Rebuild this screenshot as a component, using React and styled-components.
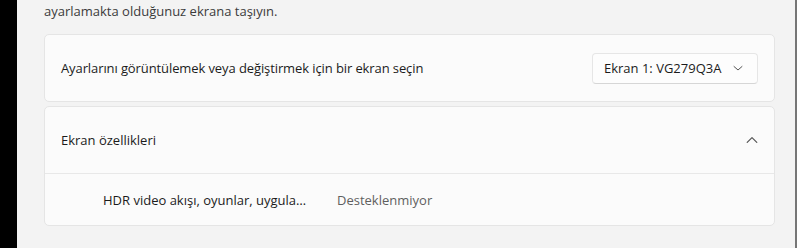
import React from "react";
import styled, { createGlobalStyle } from "styled-components";

const GlobalStyle = createGlobalStyle`
  html, body { margin: 0; padding: 0; }
  body {
    background: #f3f3f3;
    font-family: "Open Sans", "Noto Sans", "Liberation Sans", sans-serif;
    -webkit-font-smoothing: antialiased;
  }
`;

const Shell = styled.div`
  display: flex;
  height: 248px;
  width: 797px;
  overflow: hidden;
`;

const LeftStrip = styled.div`
  width: 17px;
  flex: none;
  background: #000;
`;

const RightEdge = styled.div`
  width: 2px;
  flex: none;
  background: #767676;
`;

const Main = styled.main`
  flex: 1;
  padding: 0 20px 0 27px;
  display: flex;
  flex-direction: column;
  min-width: 0;
`;

const Intro = styled.p`
  margin: -19px 0 0 0;
  font-size: 13px;
  line-height: 20px;
  color: #3b3b3b;
  white-space: nowrap;
`;

const Card = styled.section`
  background: #fbfbfb;
  border: 1px solid #e5e5e5;
  border-radius: 5px;
  margin-top: ${(p) => p.$gap || 0}px;
`;

const Row = styled.div`
  display: flex;
  align-items: center;
  justify-content: space-between;
  height: ${(p) => p.$h}px;
  padding: 0 16px;
`;

const Label = styled.span`
  font-size: 13px;
  color: #1b1b1b;
  white-space: nowrap;
  letter-spacing: ${(p) => p.$tight ? "-0.1px" : "0"};
`;

const Select = styled.button`
  display: flex;
  align-items: center;
  justify-content: space-between;
  width: 166px;
  height: 31px;
  box-sizing: border-box;
  padding: 0 14px 0 11px;
  background: #fdfdfd;
  border: 1px solid #e6e6e6;
  border-bottom-color: #d6d6d6;
  border-radius: 4px;
  font-family: inherit;
  font-size: 13px;
  color: #1b1b1b;
  cursor: pointer;
`;

const Divider = styled.div`
  height: 1px;
  background: #e8e8e8;
`;

const SubRow = styled.div`
  display: flex;
  align-items: center;
  height: 51px;
  padding-left: 58px;
`;

const SubLabel = styled.span`
  width: 234px;
  flex: none;
  font-size: 13px;
  color: #1b1b1b;
  white-space: nowrap;
`;

const SubValue = styled.span`
  font-size: 13px;
  color: #5f5f5f;
  white-space: nowrap;
`;

const Chevron = ({ up, size = 10 }) => (
  <svg width={size} height={size} viewBox="0 0 10 10" fill="none">
    <path
      d={up ? "M1 7 L5 3 L9 7" : "M1 3.5 L5 7 L9 3.5"}
      stroke="#555"
      strokeWidth="1"
      strokeLinecap="round"
      strokeLinejoin="round"
    />
  </svg>
);

export default function App() {
  return (
    <>
      <GlobalStyle />
      <Shell>
        <LeftStrip />
        <Main>
          <Intro>
            Ekranları yeniden düzenlemek için bir ekran seçin, ardından görüntü ayarlarını değiştirmek için bu pencereyi,
            <br />
            ayarlamakta olduğunuz ekrana taşıyın.
          </Intro>
          <Card $gap={13}>
            <Row $h={66}>
              <Label $tight>Ayarlarını görüntülemek veya değiştirmek için bir ekran seçin</Label>
              <Select>
                <span>Ekran 1: VG279Q3A</span>
                <Chevron size={10} />
              </Select>
            </Row>
          </Card>
          <Card $gap={4}>
            <Row $h={66}>
              <Label>Ekran özellikleri</Label>
              <Chevron up size={12} />
            </Row>
            <Divider />
            <SubRow>
              <SubLabel>HDR video akışı, oyunlar, uygula…</SubLabel>
              <SubValue>Desteklenmiyor</SubValue>
            </SubRow>
          </Card>
        </Main>
        <RightEdge />
      </Shell>
    </>
  );
}
